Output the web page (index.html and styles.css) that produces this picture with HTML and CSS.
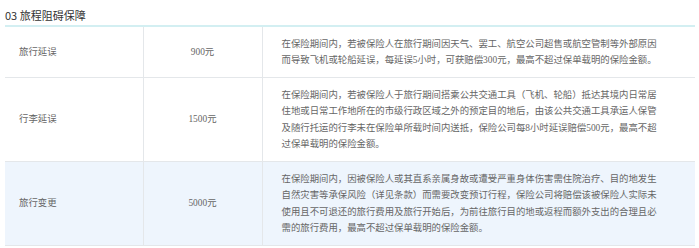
FILE: index.html
```html
<!DOCTYPE html>
<html lang="zh-CN">
<head>
<meta charset="utf-8">
<title>旅程阻碍保障</title>
<link rel="stylesheet" href="styles.css">
</head>
<body>
<section class="block">
  <h3 class="block-title">03 旅程阻碍保障</h3>
  <table class="cover-table">
    <colgroup>
      <col class="col-name">
      <col class="col-amount">
      <col class="col-desc">
    </colgroup>
    <tbody>
      <tr>
        <td class="cell-name">旅行延误</td>
        <td class="cell-amount">900元</td>
        <td class="cell-desc">在保险期间内，若被保险人在旅行期间因天气、罢工、航空公司超售或航空管制等外部原因而导致飞机或轮船延误，每延误5小时，可获赔偿300元，最高不超过保单载明的保险金额。</td>
      </tr>
      <tr>
        <td class="cell-name">行李延误</td>
        <td class="cell-amount">1500元</td>
        <td class="cell-desc">在保险期间内，若被保险人于旅行期间搭乘公共交通工具（飞机、轮船）抵达其境内日常居住地或日常工作地所在的市级行政区域之外的预定目的地后，由该公共交通工具承运人保管及随行托运的行李未在保险单所载时间内送抵，保险公司每8小时延误赔偿500元，最高不超过保单载明的保险金额。</td>
      </tr>
      <tr class="row-highlight">
        <td class="cell-name">旅行变更</td>
        <td class="cell-amount">5000元</td>
        <td class="cell-desc">在保险期间内，因被保险人或其直系亲属身故或遭受严重身体伤害需住院治疗、目的地发生自然灾害等承保风险（详见条款）而需要改变预订行程，保险公司将赔偿该被保险人实际未使用且不可退还的旅行费用及旅行开始后，为前往旅行目的地或返程而额外支出的合理且必需的旅行费用，最高不超过保单载明的保险金额。</td>
      </tr>
    </tbody>
  </table>
</section>
</body>
</html>
```

FILE: styles.css
```css
html, body {
  margin: 0;
  padding: 0;
  background: #ffffff;
}

.block {
  padding: 0 4px 0 5px;
}

.block-title {
  margin: 0;
  padding: 7px 0 2px;
  font-family: "Noto Sans CJK SC", "Noto Sans", sans-serif;
  font-size: 11px;
  line-height: 16px;
  font-weight: normal;
  color: #333333;
  border-bottom: 2px solid #d3eff2;
}

.cover-table {
  width: 690px;
  border-collapse: collapse;
  table-layout: fixed;
  font-family: "Liberation Serif", "Noto Sans CJK SC", serif;
  font-size: 9.4px;
  line-height: 16.5px;
  color: #666666;
  text-spacing-trim: space-all;
}

.col-name { width: 138px; }
.col-amount { width: 119px; }
.col-desc { width: 433px; }

.cover-table td {
  padding: 8.5px 0;
  vertical-align: middle;
  border-bottom: 1px solid #e4e7ea;
}

.cover-table td + td {
  border-left: 1px solid #e4e7ea;
}

.cell-name {
  padding-left: 14px !important;
}

.cell-amount {
  text-align: center;
}

.cell-desc {
  padding-left: 19px !important;
  padding-right: 33px !important;
}

.row-highlight td {
  background: #eef5fd;
}
```
